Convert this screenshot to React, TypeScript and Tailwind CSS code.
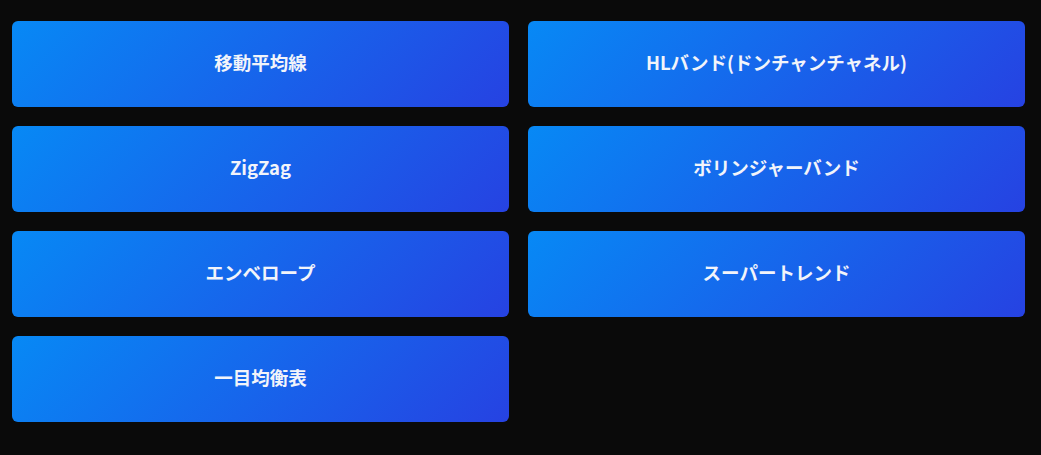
const indicators = [
  '移動平均線',
  'HLバンド(ドンチャンチャネル)',
  'ZigZag',
  'ボリンジャーバンド',
  'エンベロープ',
  'スーパートレンド',
  '一目均衡表',
];

export default function App() {
  return (
    <main
      className="min-h-[455px] bg-[#0a0a0a] pl-3 pr-4 pt-[21px] pb-8"
      style={{ fontFamily: '"Noto Sans CJK JP", "Noto Sans", sans-serif' }}
    >
      <div className="grid grid-cols-2 gap-[19px]">
        {indicators.map((name) => (
          <button
            key={name}
            className="flex h-[86px] items-center justify-center rounded-md bg-[linear-gradient(135deg,#0789f5,#2642e2)] pb-0.5 text-[18.5px] font-bold text-[#f2f4fa]"
          >
            {name}
          </button>
        ))}
      </div>
    </main>
  );
}
